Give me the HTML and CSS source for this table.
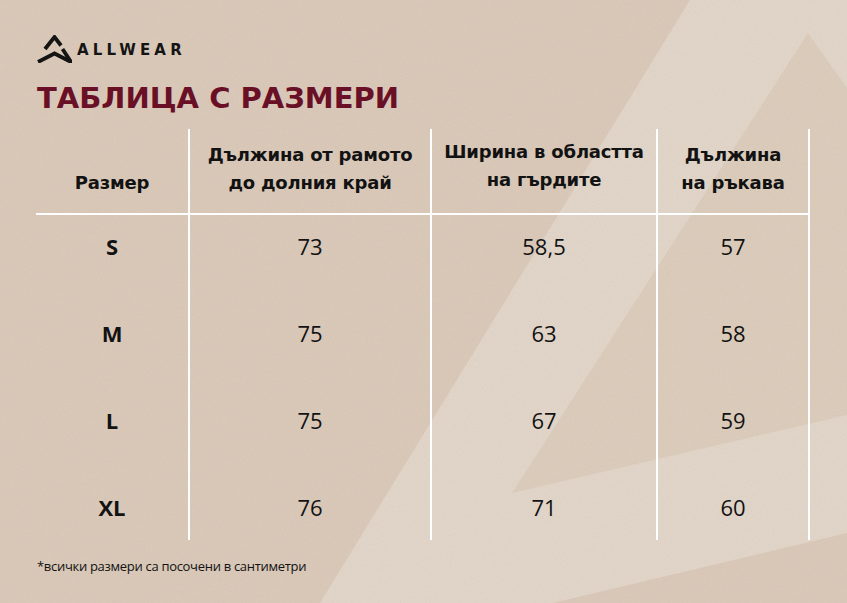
FILE: index.html
```html
<!DOCTYPE html>
<html lang="bg">
<head>
<meta charset="utf-8">
<title>Таблица с размери</title>
<link rel="stylesheet" href="styles.css">
</head>
<body>
<div class="page">
  <header class="brand">
    <svg class="brand-mark" viewBox="0 0 35 28" width="35" height="28" aria-hidden="true">
      <path d="M8 14 L17.5 2 L24 10.5" fill="none" stroke="#141414" stroke-width="3.8" stroke-linejoin="miter" stroke-linecap="butt"/>
      <path d="M1 27 L17.5 18.5 L34 27 L25.5 14" fill="none" stroke="#141414" stroke-width="3.8" stroke-linejoin="miter" stroke-linecap="butt"/>
    </svg>
    <span class="brand-name">ALLWEAR</span>
  </header>

  <h1 class="title">ТАБЛИЦА С РАЗМЕРИ</h1>

  <div class="table">
    <div class="row head">
      <div class="cell">Размер</div>
      <div class="cell">Дължина от рамото<br>до долния край</div>
      <div class="cell cell-raised">Ширина в областта<br>на гърдите</div>
      <div class="cell">Дължина<br>на ръкава</div>
    </div>
    <div class="row">
      <div class="cell size">S</div>
      <div class="cell">73</div>
      <div class="cell">58,5</div>
      <div class="cell">57</div>
    </div>
    <div class="row">
      <div class="cell size">M</div>
      <div class="cell">75</div>
      <div class="cell">63</div>
      <div class="cell">58</div>
    </div>
    <div class="row">
      <div class="cell size">L</div>
      <div class="cell">75</div>
      <div class="cell">67</div>
      <div class="cell">59</div>
    </div>
    <div class="row last">
      <div class="cell size">XL</div>
      <div class="cell">76</div>
      <div class="cell">71</div>
      <div class="cell">60</div>
    </div>
  </div>

  <p class="note">*всички размери са посочени в сантиметри</p>
</div>
</body>
</html>
```

FILE: styles.css
```css
* {
  box-sizing: border-box;
}

html, body {
  margin: 0;
  padding: 0;
}

body {
  width: 847px;
  height: 603px;
  overflow: hidden;
  color: #121212;
  font-family: "Open Sans", "DejaVu Sans", sans-serif;
  background-color: #d9c7b5;
  background-image: url("data:image/svg+xml,%3Csvg xmlns='http://www.w3.org/2000/svg' width='847' height='603' viewBox='0 0 847 603'%3E%3Cfilter id='n'%3E%3CfeTurbulence type='fractalNoise' baseFrequency='0.9' numOctaves='3' stitchTiles='stitch'/%3E%3CfeColorMatrix type='saturate' values='0'/%3E%3C/filter%3E%3Crect width='847' height='603' fill='%23dac8b7'/%3E%3Cpolygon points='690,0 847,0 847,533 553,603 320,603' fill='%23e2d5c8'/%3E%3Cpolygon points='808,33 847,88 847,415 512,493' fill='%23dccbba'/%3E%3Crect width='847' height='603' filter='url(%23n)' opacity='0.12'/%3E%3C/svg%3E");
  background-repeat: no-repeat;
}

.page {
  padding: 35px 0 0 37px;
}

.brand {
  display: flex;
  align-items: center;
  height: 28px;
  gap: 5px;
}

.brand-mark {
  display: block;
  flex: none;
}

.brand-name {
  font-family: "DejaVu Sans", sans-serif;
  font-weight: 700;
  font-size: 15px;
  letter-spacing: 4.2px;
  line-height: 15px;
  color: #141414;
  margin-top: 3px;
}

.title {
  margin: 18px 0 0 0;
  font-family: "DejaVu Sans", sans-serif;
  font-weight: 700;
  font-size: 29px;
  line-height: 34px;
  color: #6a1026;
  letter-spacing: 0;
}

.table {
  margin: 14px 0 0 -1px;
  width: 774px;
}

.row {
  display: grid;
  grid-template-columns: 154px 242px 226px 152px;
  height: 87px;
}

.row.last {
  height: 64px;
}

.row.head {
  height: 86px;
  border-bottom: 2px solid #ffffff;
}

.cell {
  display: flex;
  justify-content: center;
  align-items: flex-start;
  text-align: center;
  border-right: 2px solid #ffffff;
  padding-top: 16px;
  font-size: 22px;
  line-height: 30px;
  font-weight: 400;
}

.head .cell {
  align-items: flex-end;
  padding-top: 0;
  padding-bottom: 16px;
  font-family: "DejaVu Sans", sans-serif;
  font-weight: 700;
  font-size: 18px;
  line-height: 28px;
  letter-spacing: -0.2px;
}

.head .cell-raised {
  padding-bottom: 19px;
}

.cell.size {
  font-weight: 700;
}

.note {
  margin: 17px 0 0 0;
  font-size: 13px;
  line-height: 18px;
  font-weight: 400;
  letter-spacing: -0.3px;
}
```
